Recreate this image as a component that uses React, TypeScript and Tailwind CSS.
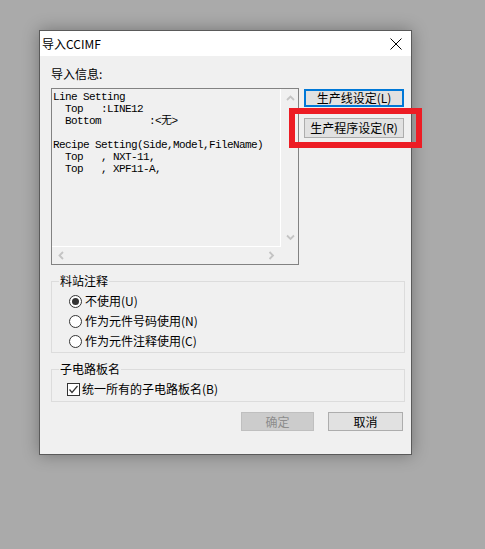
import React from 'react';

interface ButtonProps {
  children: React.ReactNode;
  className?: string;
  focused?: boolean;
  disabled?: boolean;
}

const WinButton: React.FC<ButtonProps> = ({ children, className = '', focused, disabled }) => {
  let look = 'border border-[#adadad] bg-[#e1e1e1] text-black';
  if (focused) look = 'border-2 border-[#0078d7] bg-[#e1e1e1] text-black';
  if (disabled) look = 'border border-[#bfbfbf] bg-[#cccccc] text-[#8d8d8d]';
  return (
    <button
      disabled={disabled}
      className={`flex items-center justify-center text-[12px] leading-[14px] ${look} ${className}`}
    >
      {children}
    </button>
  );
};

const Chevron: React.FC<{ dir: 'up' | 'down' | 'left' | 'right' }> = ({ dir }) => {
  const d = {
    up: 'M1 5L4.5 1.5L8 5',
    down: 'M1 1.5L4.5 5L8 1.5',
    left: 'M5 1L1.5 4.5L5 8',
    right: 'M1.5 1L5 4.5L1.5 8',
  }[dir];
  const vertical = dir === 'up' || dir === 'down';
  return (
    <svg
      width={vertical ? 9 : 7}
      height={vertical ? 7 : 9}
      viewBox={vertical ? '0 0 9 7' : '0 0 7 9'}
      fill="none"
    >
      <path d={d} stroke="#c4c4c4" strokeWidth={1.8} />
    </svg>
  );
};

const infoText = `Line Setting
  Top   :LINE12
  Bottom        :<无>

Recipe Setting(Side,Model,FileName)
  Top   , NXT-11,
  Top   , XPF11-A,`;

const InfoBox: React.FC = () => (
  <div className="h-[177px] w-[248px] border border-[#828282] bg-[#f0f0f0]">
    <div className="grid h-full grid-cols-[229px_17px] grid-rows-[158px_17px]">
      {/* text area */}
      <div className="overflow-hidden border-r border-b border-white pl-[1px] pt-[2px]">
        <pre className="font-['Liberation_Mono','Noto_Sans_CJK_SC',monospace] text-[11px] leading-[12px] tracking-[-0.6px] text-black">
          {infoText}
        </pre>
      </div>
      {/* vertical scrollbar */}
      <div className="flex flex-col items-center justify-between pt-[6px] pb-[6px] pl-[1px]">
        <Chevron dir="up" />
        <Chevron dir="down" />
      </div>
      {/* horizontal scrollbar */}
      <div className="flex items-center justify-between pl-[6px] pr-[6px]">
        <Chevron dir="left" />
        <Chevron dir="right" />
      </div>
      <div />
    </div>
  </div>
);

const Radio: React.FC<{ checked?: boolean; label: string }> = ({ checked, label }) => (
  <div className="flex h-[20px] items-center pl-[17px]">
    <span className="flex h-[13px] w-[13px] items-center justify-center rounded-full border border-[#333333] bg-white">
      {checked && <span className="h-[7px] w-[7px] rounded-full bg-[#333333]" />}
    </span>
    <span className="ml-[3px] leading-[14px]">{label}</span>
  </div>
);

export default function App() {
  return (
    <div className="min-h-[549px] w-full bg-[#aaaaaa] pl-[39px] pt-[30px] font-['Noto_Sans_CJK_SC',sans-serif] text-[12px] text-black">
      <div className="relative flex h-[425px] w-[373px] flex-col border border-[#5a5a5a] bg-[#f0f0f0] shadow-[0_0_16px_rgba(0,0,0,0.32)]">
        {/* Title bar */}
        <div className="flex h-[25px] items-center justify-between bg-white pl-[2px] pr-[9px]">
          <span className="leading-[14px]">导入CCIMF</span>
          <svg width="12" height="12" viewBox="0 0 12 12" fill="none">
            <path d="M0.5 0.5L11.5 11.5M11.5 0.5L0.5 11.5" stroke="#000" strokeWidth={1} />
          </svg>
        </div>

        {/* Body */}
        <div className="flex-1 pl-[11px]">
          <div className="h-[32px] pt-[11px] leading-[14px]">导入信息:</div>

          <div className="flex">
            <InfoBox />
            <div className="ml-[5px] flex flex-col pt-[1px]">
              <WinButton focused className="h-[18px] w-[100px]">生产线设定(L)</WinButton>
              <WinButton className="mt-[11px] h-[20px] w-[100px]">生产程序设定(R)</WinButton>
            </div>
          </div>

          <fieldset className="mt-[9px] w-[354px] border border-[#dcdcdc]">
            <legend className="ml-[7px] px-[1px] leading-[14px]">料站注释</legend>
            <div className="pt-[3px] pb-[1px]">
              <Radio checked label="不使用(U)" />
              <Radio label="作为元件号码使用(N)" />
              <Radio label="作为元件注释使用(C)" />
            </div>
          </fieldset>

          <fieldset className="mt-[9px] w-[354px] border border-[#dcdcdc]">
            <legend className="ml-[7px] px-[1px] leading-[14px]">子电路板名</legend>
            <div className="pt-[3px] pb-[2px]">
              <div className="flex h-[20px] items-center pl-[15px]">
                <span className="flex h-[13px] w-[13px] items-center justify-center border border-[#333333] bg-white">
                  <svg width="11" height="11" viewBox="0 0 11 11" fill="none">
                    <path d="M1.5 5.5L4 8.5L9.5 2" stroke="#333" strokeWidth={1.2} />
                  </svg>
                </span>
                <span className="ml-[2px] leading-[14px]">统一所有的子电路板名(B)</span>
              </div>
            </div>
          </fieldset>

          <div className="mt-[10px] ml-[190px] flex gap-[14px]">
            <WinButton disabled className="h-[19px] w-[73px]">确定</WinButton>
            <WinButton className="h-[19px] w-[75px]">取消</WinButton>
          </div>
        </div>

        {/* annotation box */}
        <div className="absolute left-[249px] top-[77px] h-[40px] w-[133px] border-[6px] border-[#ed1c24]" />
      </div>
    </div>
  );
}
